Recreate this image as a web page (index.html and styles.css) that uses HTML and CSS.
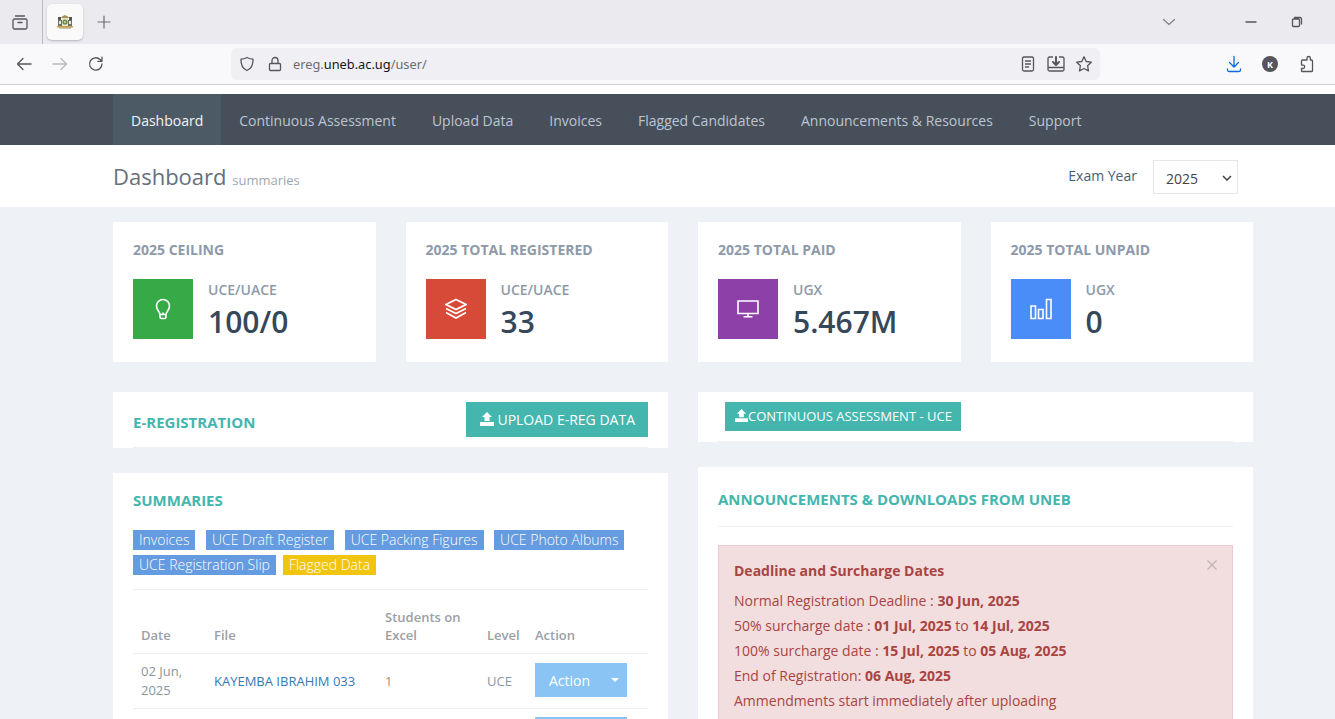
FILE: index.html
```html
<!DOCTYPE html>
<html lang="en">
<head>
<meta charset="utf-8">
<title>UNEB e-Registration</title>
<link rel="stylesheet" href="styles.css">
</head>
<body>
<div class="tabstrip">
  <span class="chrome-btn tabs-btn"><svg width="18" height="18" viewBox="0 0 18 18" class="ic"><path d="M4.500 3h9M2 7.500A1.500 1.500 0 0 1 3.500 6h11A1.500 1.500 0 0 1 16 7.500v7a1.500 1.500 0 0 1-1.500 1.500h-11A1.500 1.500 0 0 1 2 14.500zM7 9.500h4"/></svg></span>
  <span class="tab-sep"></span>
  <span class="tab"><svg width="18" height="16" viewBox="0 0 18 16"><path d="M6 2.500 9 1l3 1.500L13 4H5z" fill="#a8914f"/><rect x="2" y="3" width="3" height="3" fill="#55584a"/><rect x="13" y="3" width="3" height="3" fill="#55584a"/><rect x="2" y="6" width="4" height="6" fill="#6f7263"/><rect x="12" y="6" width="4" height="6" fill="#6f7263"/><rect x="3" y="7" width="2" height="3" fill="#e6e6da"/><rect x="13" y="7" width="2" height="3" fill="#e6e6da"/><rect x="6" y="4" width="6" height="8" fill="#e3e4d4"/><circle cx="9" cy="8" r="2.600" fill="#6f8a4a"/><circle cx="9" cy="8" r="1" fill="#d8d6a8"/><rect x="1" y="12" width="16" height="1.500" fill="#c9a24a"/><rect x="3" y="13.500" width="12" height="1" fill="#9a8c50"/></svg></span>
  <span class="plus-btn"><svg width="16" height="16" viewBox="0 0 16 16" class="ic thin"><path d="M8 2v12M2 8h12"/></svg></span>
  <span class="strip-right">
    <svg width="16" height="16" viewBox="0 0 16 16" class="ic grey"><path d="M2.500 5.500 8 10.500l5.500-5"/></svg>
    <svg class="win-min ic" width="12" height="12" viewBox="0 0 12 12"><path d="M1 6h10"/></svg>
    <svg class="win-max ic" width="12" height="12" viewBox="0 0 12 12"><path d="M1.500 4a1 1 0 0 1 1-1h5a1 1 0 0 1 1 1v5.500a1 1 0 0 1-1 1h-5a1 1 0 0 1-1-1zM3.500 1.500h5.500a1.500 1.500 0 0 1 1.500 1.500v5"/></svg>
  </span>
</div>
<div class="toolbar">
  <span class="tool"><svg width="18" height="18" viewBox="0 0 18 18" class="ic"><path d="M16 9H2.500M8 3.500 2.500 9 8 14.500"/></svg></span>
  <span class="tool"><svg width="18" height="18" viewBox="0 0 18 18" class="ic faded"><path d="M2 9h13.500M10 3.500 15.500 9 10 14.500"/></svg></span>
  <span class="tool"><svg width="18" height="18" viewBox="0 0 18 18" class="ic"><path d="M15 9a6.200 6.200 0 1 1-1.900-4.500L15 6.300M15 2.200v4.100h-4.100"/></svg></span>
  <div class="urlbar">
    <svg width="16" height="16" viewBox="0 0 16 16" class="ic"><path d="M8 1.500c2 1.100 4 1.600 6 1.700.2 5.800-1.800 9.500-6 11.300C3.800 12.700 1.800 9 2 3.200c2-.1 4-.6 6-1.700z"/></svg>
    <svg class="lock ic" width="16" height="16" viewBox="0 0 16 16"><path d="M2.500 8.500a1 1 0 0 1 1-1h9a1 1 0 0 1 1 1v5a1 1 0 0 1-1 1h-9a1 1 0 0 1-1-1zM5 7.500V4.500a3 3 0 0 1 6 0v3"/></svg>
    <span class="url">ereg.<b>uneb.ac.ug</b>/user/</span>
    <span class="url-icons">
      <svg width="18" height="18" viewBox="0 0 18 18" class="ic"><path d="M3.500 3.500a1.500 1.500 0 0 1 1.500-1.500h8a1.500 1.500 0 0 1 1.500 1.500v11a1.500 1.500 0 0 1-1.500 1.500H5a1.500 1.500 0 0 1-1.500-1.500zM6.500 6h5M6.500 9h5M6.500 12h3"/></svg>
      <svg width="18" height="18" viewBox="0 0 18 18" class="ic"><path d="M5.500 2H2.500A1.500 1.500 0 0 0 1 3.500v11A1.500 1.500 0 0 0 2.500 16h13a1.500 1.500 0 0 0 1.500-1.500v-11A1.500 1.500 0 0 0 15.500 2h-3M1 12.500h16"/><path d="M9 2v7M6 7l3 3 3-3" stroke-width="2"/></svg>
      <svg width="18" height="18" viewBox="0 0 18 18" class="ic"><path d="m9 1.800 2.200 4.700 5.100.7-3.700 3.600.9 5.100L9 13.500l-4.500 2.400.9-5.100-3.700-3.600 5.100-.7z"/></svg>
    </span>
  </div>
  <span class="tool tool-first"><svg width="18" height="18" viewBox="0 0 18 18" class="ic blue"><path d="M9 1.500v10M4.500 7.500 9 12l4.500-4.500M2.500 14v1a1.500 1.500 0 0 0 1.500 1.500h10a1.500 1.500 0 0 0 1.500-1.500v-1"/></svg></span>
  <span class="tool"><span class="avatar">K</span></span>
  <span class="tool"><svg width="18" height="18" viewBox="0 0 18 18" class="ic"><path d="M7.500 5H10V3.200a1.700 1.700 0 0 1 3.400 0V5h1.100a1 1 0 0 1 1 1v10a.5.500 0 0 1-.5.500H5a.5.500 0 0 1-.5-.5v-2.500H6a1.700 1.700 0 0 0 0-3.400H4.500V6a1 1 0 0 1 1-1z"/></svg></span>
</div>
<div class="toolbar-gap"></div>

<nav class="navbar">
  <div class="container nav-items">
    <a class="nav-link active">Dashboard</a>
    <a class="nav-link">Continuous Assessment</a>
    <a class="nav-link">Upload Data</a>
    <a class="nav-link">Invoices</a>
    <a class="nav-link">Flagged Candidates</a>
    <a class="nav-link">Announcements &amp; Resources</a>
    <a class="nav-link">Support</a>
  </div>
</nav>

<header class="page-head">
  <div class="container head-row">
    <h1 class="page-title">Dashboard <small>summaries</small></h1>
    <div class="year-filter">
      <span class="year-label">Exam Year</span>
      <span class="select-wrap">
        <select class="year-select"><option>2025</option></select>
        <svg class="select-caret" width="10" height="6" viewBox="0 0 10 6"><path d="M1 1l4 4 4-4"/></svg>
      </span>
    </div>
  </div>
</header>

<main class="container content">
  <section class="stats">
    <div class="stat">
      <div class="stat-title">2025 Ceiling</div>
      <div class="stat-body">
        <span class="stat-icon green"><svg width="20" height="22" viewBox="0 0 20 22" class="wi"><path d="M7 16.500c0-3-3.500-4-3.500-8.500a6.500 6.500 0 0 1 13 0c0 4.500-3.500 5.500-3.500 8.500zM7 16.500v2.500a1.500 1.500 0 0 0 1.500 1.500h3A1.500 1.500 0 0 0 13 19v-2.500M10 16.500v-2"/></svg></span>
        <div class="stat-text"><div class="stat-label">UCE/UACE</div><div class="stat-value">100/0</div></div>
      </div>
    </div>
    <div class="stat">
      <div class="stat-title">2025 Total Registered</div>
      <div class="stat-body">
        <span class="stat-icon red"><svg width="22" height="22" viewBox="0 0 22 22" class="wi"><path d="M11 1.500 21 6.500l-10 5-10-5zM1 10.500l10 5 10-5M1 14.500l10 5.500 10-5.500"/></svg></span>
        <div class="stat-text"><div class="stat-label">UCE/UACE</div><div class="stat-value">33</div></div>
      </div>
    </div>
    <div class="stat">
      <div class="stat-title">2025 Total Paid</div>
      <div class="stat-body">
        <span class="stat-icon purple"><svg width="22" height="18" viewBox="0 0 22 18" class="wi"><path d="M1 1h20v12.500H1zM11 13.500v3M6.500 16.800h9"/></svg></span>
        <div class="stat-text"><div class="stat-label">UGX</div><div class="stat-value">5.467M</div></div>
      </div>
    </div>
    <div class="stat">
      <div class="stat-title">2025 Total Unpaid</div>
      <div class="stat-body">
        <span class="stat-icon blue-bg"><svg width="22" height="22" viewBox="0 0 22 22" class="wi"><path d="M1 8h4.500v12.500H1zM8.500 11.500H13v9H8.500zM16.500 1.500H21v19h-4.500z"/></svg></span>
        <div class="stat-text"><div class="stat-label">UGX</div><div class="stat-value">0</div></div>
      </div>
    </div>
  </section>

  <section class="columns">
    <div class="col">
      <div class="panel ereg">
        <div class="ereg-row">
          <h2 class="panel-title">E-Registration</h2>
          <a class="btn-teal btn-lg"><svg width="14" height="14" viewBox="0 0 14 14"><path class="solid" d="M7 0l5 5H9.500v4h-5V5H2zM0 10h14v4H0z"/></svg>UPLOAD E-REG DATA</a>
        </div>
      </div>
      <div class="panel summaries">
        <h2 class="panel-title sum-title">Summaries</h2>
        <div class="labels">
          <a class="label">Invoices</a><a class="label">UCE Draft Register</a><a class="label">UCE Packing Figures</a><a class="label">UCE Photo Albums</a><a class="label">UCE Registration Slip</a><a class="label yellow">Flagged Data</a>
        </div>
        <table class="table">
          <thead>
            <tr><th class="c-date">Date</th><th class="c-file">File</th><th class="c-num">Students on Excel</th><th class="c-level">Level</th><th>Action</th></tr>
          </thead>
          <tbody>
            <tr><td>02 Jun, 2025</td><td><a class="file-link">KAYEMBA IBRAHIM 033</a></td><td class="num">1</td><td class="lvl">UCE</td><td><span class="action"><span>Action</span><i class="caret"></i></span></td></tr>
            <tr><td></td><td></td><td></td><td></td><td><span class="action"></span></td></tr>
          </tbody>
        </table>
      </div>
    </div>
    <div class="col">
      <div class="panel ca">
        <a class="btn-teal btn-sm"><svg width="13" height="13" viewBox="0 0 14 14"><path class="solid" d="M7 0l5 5H9.500v4h-5V5H2zM0 10h14v4H0z"/></svg>CONTINUOUS ASSESSMENT - UCE</a>
      </div>
      <div class="panel announce">
        <h2 class="panel-title ann-title">Announcements &amp; Downloads from UNEB</h2>
        <div class="alert">
          <svg class="alert-close" width="10" height="10" viewBox="0 0 10 10"><path d="M.5.500l9 9M9.500.500l-9 9"/></svg>
          <h3 class="alert-title">Deadline and Surcharge Dates</h3>
          <p>Normal Registration Deadline : <b>30 Jun, 2025</b></p>
          <p>50% surcharge date : <b>01 Jul, 2025</b> to <b>14 Jul, 2025</b></p>
          <p>100% surcharge date : <b>15 Jul, 2025</b> to <b>05 Aug, 2025</b></p>
          <p>End of Registration: <b>06 Aug, 2025</b></p>
          <p>Ammendments start immediately after uploading</p>
        </div>
      </div>
    </div>
  </section>
</main>
</body>
</html>
```
FILE: styles.css
```css
* { box-sizing: border-box; }
html, body { margin: 0; height: 719px; overflow: hidden; }
body { background: #eef1f5; font-family: "Open Sans", sans-serif; font-size: 14px; color: #333; }
a { text-decoration: none; }
h1, h2, h3, p { margin: 0; }

.ic { fill: none; stroke: #55555c; stroke-width: 1.3; stroke-linecap: round; stroke-linejoin: round; display: block; }
.ic.thin { stroke: #6a6a70; stroke-width: 1.2; }
.ic.grey { stroke: #85858b; }
.ic.faded { stroke: #b9b9bd; }
.ic.blue { stroke: #0b6be0; }

.tabstrip { height: 44px; background: #eaeaef; display: flex; align-items: center; }
.tabs-btn { width: 40px; display: flex; justify-content: center; margin-right: 2px; }
.tab-sep { width: 1px; height: 44px; background: #b9b9bf; }
.tab { width: 36px; height: 36px; margin-left: 4px; background: #fafafb; border-radius: 5px; box-shadow: 0 1px 2px rgba(0,0,0,.22); display: flex; align-items: center; justify-content: center; }
.plus-btn { margin-left: 13px; }
.strip-right { margin-left: auto; display: flex; align-items: center; padding-right: 32px; }
.win-min { margin-left: 68px; }
.win-max { margin-left: 34px; }

.toolbar { height: 41px; background: #f9f9fb; border-bottom: 1px solid #cfcfd4; display: flex; align-items: center; padding: 0 11px 0 6px; }
.tool { width: 36px; height: 32px; display: flex; align-items: center; justify-content: center; }
.tool-first { margin-left: auto; }
.urlbar { margin-left: 117px; width: 869px; height: 32px; background: #f0f0f4; border-radius: 6px; display: flex; align-items: center; padding: 0 7px 0 8px; }
.lock { margin-left: 12px; }
.url { margin-left: 10px; font-family: "Noto Sans", sans-serif; font-size: 12.800px; color: #6c6c72; }
.url b { font-weight: 400; color: #15141a; }
.url-icons { margin-left: auto; display: flex; align-items: center; gap: 10px; }
.avatar { width: 16px; height: 16px; border-radius: 50%; background: #55555c; color: #fff; font-size: 9px; font-weight: 700; display: flex; align-items: center; justify-content: center; }
.toolbar-gap { height: 9px; background: #fff; }

.container { width: 1140px; margin-left: 113px; }
.navbar { height: 51px; background: #474f5b; }
.nav-items { display: flex; height: 51px; }
.nav-link { padding: 0 18px; line-height: 53px; color: #bcc5d0; }
.nav-link.active { background: #4c5a65; color: #f1f4f7; }

.page-head { height: 62px; background: #fff; }
.head-row { display: flex; justify-content: space-between; align-items: center; height: 62px; padding-right: 15px; }
.page-title { font-size: 22px; font-weight: 400; color: #666f7b; line-height: 1; }
.page-title small { font-size: 13px; color: #9aa7b4; }
.year-filter { display: flex; align-items: center; margin-top: 2px; }
.year-label { color: #4a5d75; margin-right: 16px; margin-top: -3px; }
.select-wrap { position: relative; display: block; }
.year-select { appearance: none; -webkit-appearance: none; display: block; width: 85px; height: 34px; padding: 2px 0 0 12px; background: #fff; border: 1px solid #e3e5e8; border-radius: 0; font: 14px "Open Sans", sans-serif; color: #444; }
.select-caret { position: absolute; right: 6px; top: 15px; fill: none; stroke: #444; stroke-width: 1.5; }

.content { padding-top: 15px; }
.stats { display: grid; grid-template-columns: repeat(4, 1fr); gap: 30px; }
.stat { height: 140px; background: #fff; padding: 20px; }
.stat-title { font-weight: 700; font-size: 14px; line-height: 16px; color: #8e9aa9; text-transform: uppercase; }
.stat-body { display: flex; margin-top: 21px; gap: 15px; }
.stat-text { padding-top: 1px; }
.stat-icon { width: 60px; height: 60px; display: flex; align-items: center; justify-content: center; }
.green { background: #37aa48; }
.red { background: #d84a38; }
.purple { background: #8e40a9; }
.blue-bg { background: #4b8df8; }
.wi { fill: none; stroke: #fff; stroke-width: 1.600; }
.stat-label { font-size: 14px; line-height: 20px; font-weight: 600; color: #8e9aa9; }
.stat-value { font-size: 30px; line-height: 44px; font-weight: 600; color: #36475a; }

.columns { display: grid; grid-template-columns: 1fr 1fr; gap: 30px; margin-top: 30px; }
.panel { background: #fff; padding: 0 20px; }
.panel-title { font-size: 15px; font-weight: 700; color: #44b6ae; text-transform: uppercase; line-height: 20px; }
.ereg { height: 56px; margin-bottom: 25px; }
.ereg-row { height: 56px; border-bottom: 1px solid #eef0f3; display: flex; align-items: center; justify-content: space-between; }
.ereg-row .panel-title { margin-top: 4px; }
.btn-teal { background: #44b6ae; color: #fff; display: flex; align-items: center; }
.btn-teal svg { display: block; }
.solid { fill: #fff; }
.btn-lg { height: 35px; padding: 0 13px 1px 14px; gap: 3px; }
.ca { height: 50px; margin-bottom: 25px; padding-top: 10px; display: flex; flex-direction: column; align-items: flex-start; }
.ca::after { content: ""; align-self: stretch; height: 1px; background: #eef0f3; margin-top: 10px; }
.btn-sm { height: 29px; margin-left: 7px; padding: 0 9px 2px 10px; font-size: 13px; }

.summaries { height: 300px; padding-top: 17px; }
.labels { margin-top: 20px; padding-bottom: 14px; border-bottom: 1px solid #eef0f3; display: flex; flex-wrap: wrap; gap: 5px 0; }
.label { background: #659be0; color: #fff; height: 20px; line-height: 20px; padding: 0 6px; margin-right: 10.500px; font-weight: 300; }
.label.yellow { background: #f1c40f; margin-left: -3.500px; }
.table { width: 100%; border-collapse: collapse; margin-top: 10px; table-layout: fixed; font-size: 13px; }
.table th { padding: 8px 8px 9px; text-align: left; font-weight: 600; color: #9aa0a6; line-height: 18px; vertical-align: bottom; border-bottom: 1px solid #eef0f3; }
.table td { padding: 8px; color: #8c949c; line-height: 19px; vertical-align: middle; border-bottom: 1px solid #eef0f3; height: 53px; }
.table td:last-child { padding-top: 6px; padding-bottom: 8px; }
.c-date { width: 73px; }
.c-file { width: 171px; }
.c-num { width: 102px; }
.c-level { width: 48px; }
.file-link { color: #337ab7; }
.table td.num { color: #b2876f; }
.table td.lvl { color: #8797a8; }
.action { width: 92px; height: 34px; background: #89c4f4; color: #fff; font-size: 14px; display: flex; align-items: center; justify-content: space-between; padding: 0 8px 0 14px; }
.caret { width: 0; height: 0; border-left: 4px solid transparent; border-right: 4px solid transparent; border-top: 4px solid #fff; }

.announce { height: 300px; padding-top: 22px; }
.ann-title { padding-bottom: 17px; border-bottom: 1px solid #eef0f3; }
.alert { position: relative; margin-top: 18px; background: #f2dede; border: 1px solid #ebccd1; color: #a94442; padding: 15px; height: 260px; }
.alert-title { font-size: 14px; font-weight: 700; line-height: 20px; margin-bottom: 7px; }
.alert p { line-height: 25px; }
.alert-close { position: absolute; top: 14px; right: 15px; fill: none; stroke: #c3b3b5; stroke-width: 1.4; }
```
